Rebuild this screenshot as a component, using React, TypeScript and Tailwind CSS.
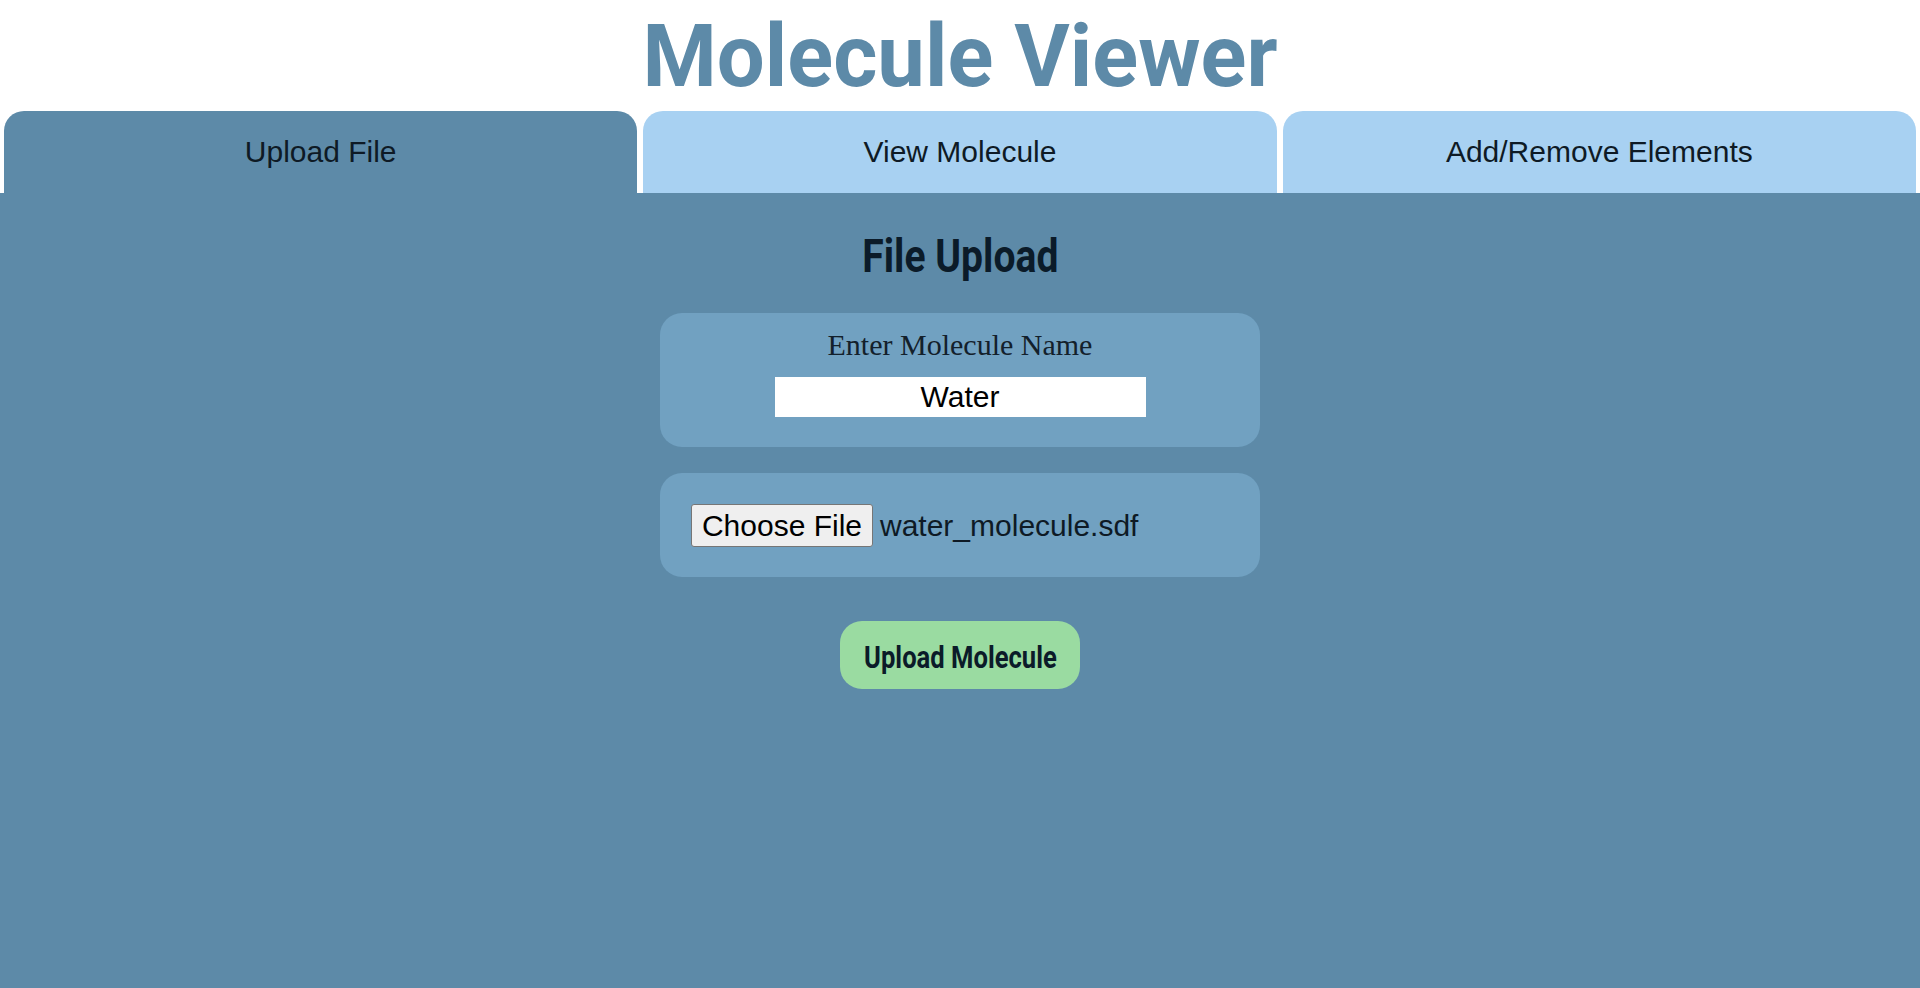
import React from "react";

const tabs = ["Upload File", "View Molecule", "Add/Remove Elements"];

export default function App() {
  return (
    <div className="min-h-screen flex flex-col bg-white">
      <h1 className="h-[111px] pt-[12px] text-center leading-none">
        <span className="inline-block scale-x-[0.965] font-['Roboto',sans-serif] font-bold text-[88px] leading-none text-[#5d8aa8] whitespace-nowrap">
          Molecule Viewer
        </span>
      </h1>
      <div className="flex gap-[6px] px-[4px] h-[82px]">
        {tabs.map((t, i) => (
          <div
            key={t}
            className={
              "flex-1 flex items-center justify-center pb-[2px] rounded-t-[20px] font-['Liberation_Sans',Arial,sans-serif] text-[30px] text-[#0e1a25] " +
              (i === 0 ? "bg-[#5d8aa8]" : "bg-[#a8d1f2]")
            }
          >
            {t}
          </div>
        ))}
      </div>
      <main className="flex-1 bg-[#5d8aa8] flex flex-col items-center">
        <h2 className="mt-[40px] h-[46px] leading-none">
          <span className="inline-block scale-x-[0.85] font-['Roboto',sans-serif] font-bold text-[46px] leading-none text-[#0b1b29] whitespace-nowrap">
            File Upload
          </span>
        </h2>
        <div className="mt-[34px] w-[600px] rounded-[22px] bg-[#71a1c1] pt-[15px] pb-[30px] flex flex-col items-center">
          <label className="font-['Liberation_Serif','Times_New_Roman',serif] text-[30px] leading-[34px] text-[#13202b]">
            Enter Molecule Name
          </label>
          <input
            className="mt-[15px] w-[371px] h-[40px] pb-[2px] bg-white text-center font-['Liberation_Sans',Arial,sans-serif] text-[30px] text-black outline-none"
            defaultValue="Water"
          />
        </div>
        <div className="mt-[26px] w-[600px] rounded-[22px] bg-[#71a1c1] pt-[30px] pb-[29px] pr-[30px] pl-[31px] flex items-center">
          <button className="h-[43px] w-[182px] bg-[#efefef] border border-[#767676] rounded-[3px] font-['Liberation_Sans',Arial,sans-serif] text-[30px] text-black leading-none">
            Choose File
          </button>
          <span className="ml-[7px] font-['Liberation_Sans',Arial,sans-serif] text-[30px] text-[#0e1a25]">
            water_molecule.sdf
          </span>
        </div>
        <button className="mt-[44px] w-[240px] h-[68px] pt-[4px] rounded-[22px] bg-[#9adba1] flex items-center justify-center">
          <span className="inline-block scale-x-[0.8] font-['Roboto',sans-serif] font-bold text-[32px] leading-none text-[#0b1b29] whitespace-nowrap">
            Upload Molecule
          </span>
        </button>
      </main>
    </div>
  );
}
